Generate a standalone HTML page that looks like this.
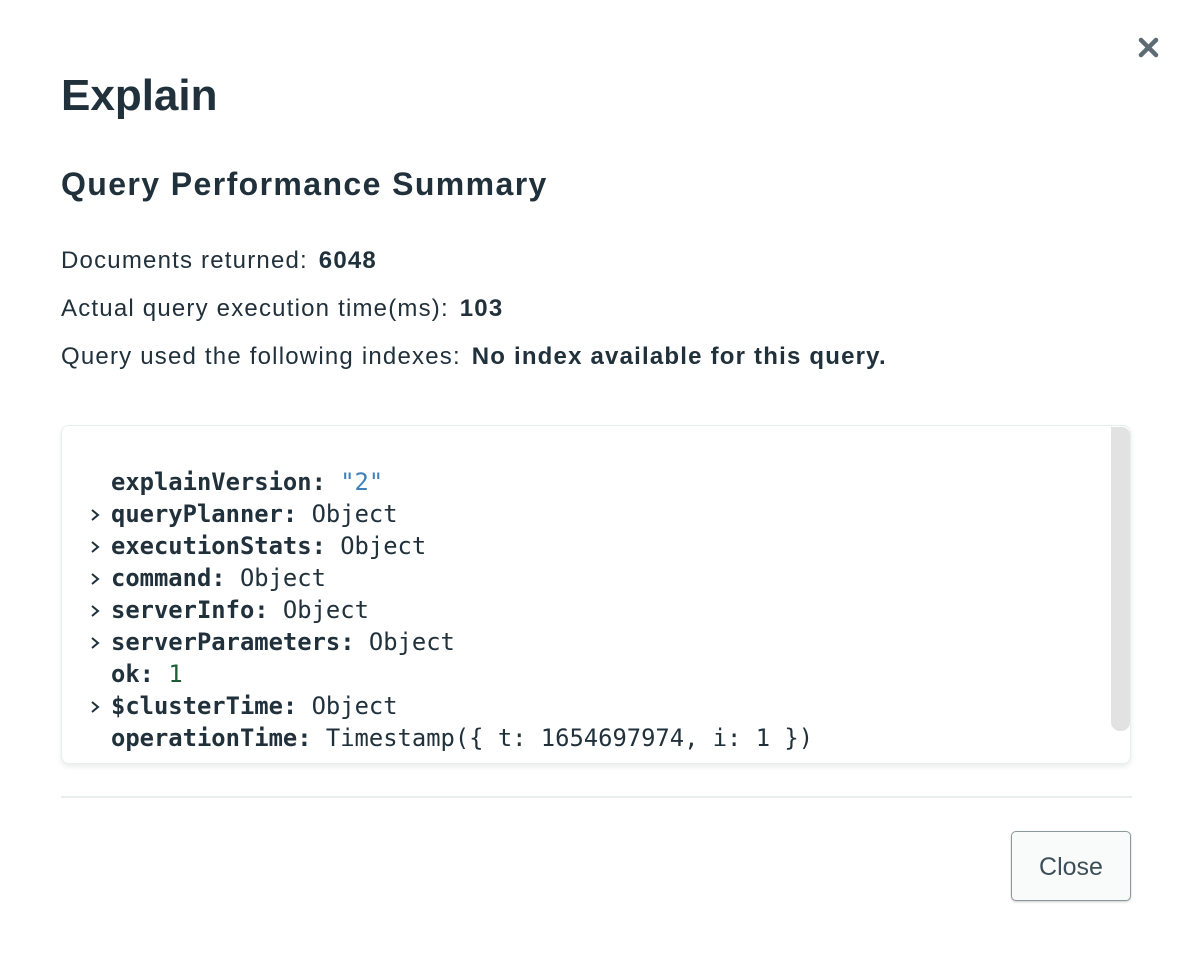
<!DOCTYPE html>
<html><head><meta charset="utf-8"><style>
body{margin:0;width:1192px;height:962px;background:#fff;font-family:"Liberation Sans",sans-serif;color:#21313c;position:relative;overflow:hidden}
.abs{position:absolute;white-space:nowrap}
h1{position:absolute;left:61px;top:68px;margin:0;font-size:44px;font-weight:bold;line-height:56px}
h2{position:absolute;left:61px;top:164px;margin:0;font-size:32px;font-weight:bold;line-height:40px;letter-spacing:1.4px}
.p{position:absolute;left:61px;font-size:24px;line-height:30px;white-space:nowrap;letter-spacing:1.2px}
.p b{font-weight:bold;margin-left:3px}
.box{position:absolute;left:61px;top:425px;width:1068px;height:337px;border:1px solid #e7eeec;border-radius:8px;box-shadow:0 3px 6px rgba(0,0,0,0.08);background:#fff}
.sb{position:absolute;left:1111px;top:427px;width:19px;height:304px;background:#e2e2e2;border-radius:0 8px 9px 9px}
.code{position:absolute;left:86px;top:466px;font-family:"DejaVu Sans Mono",monospace;font-size:23.8px;line-height:32px;white-space:pre;color:#21313c}
.code b{font-weight:bold}
.s{color:#3f80b8}.n{color:#1b5e35}
.ar{display:inline-block;width:25px;position:relative}
.ar svg{position:absolute;left:3px;top:-15px}
.hr{position:absolute;left:61px;top:796px;width:1071px;height:2px;background:#e7eeec}
.btn{position:absolute;left:1011px;top:831px;width:118px;height:68px;border:1.5px solid #89989b;border-radius:5px;background:#f9fbfa;box-shadow:0 1px 2px rgba(0,0,0,0.2);font-size:25px;color:#3d4f58;text-align:center;line-height:70px}
</style></head><body>
<svg class="abs" style="left:1138px;top:37px" width="21" height="21" viewBox="0 0 21 21"><path d="M3 3L18 18M18 3L3 18" stroke="#5d6c74" stroke-width="4.5" stroke-linecap="round"/></svg>
<h1>Explain</h1>
<h2>Query Performance Summary</h2>
<div class="p" style="top:246px">Documents returned: <b>6048</b></div>
<div class="p" style="top:294px">Actual query execution time(ms): <b>103</b></div>
<div class="p" style="top:342px">Query used the following indexes: <b>No index available for this query.</b></div>
<div class="box"></div>
<div class="sb"></div>
<div class="code"><span class="ar"></span><b>explainVersion:</b> <span class="s">"2"</span>
<span class="ar"><svg width="12" height="16" viewBox="0 0 12 16"><path d="M3 3L9 8L3 13" fill="none" stroke="#21313c" stroke-width="2"/></svg></span><b>queryPlanner:</b> Object
<span class="ar"><svg width="12" height="16" viewBox="0 0 12 16"><path d="M3 3L9 8L3 13" fill="none" stroke="#21313c" stroke-width="2"/></svg></span><b>executionStats:</b> Object
<span class="ar"><svg width="12" height="16" viewBox="0 0 12 16"><path d="M3 3L9 8L3 13" fill="none" stroke="#21313c" stroke-width="2"/></svg></span><b>command:</b> Object
<span class="ar"><svg width="12" height="16" viewBox="0 0 12 16"><path d="M3 3L9 8L3 13" fill="none" stroke="#21313c" stroke-width="2"/></svg></span><b>serverInfo:</b> Object
<span class="ar"><svg width="12" height="16" viewBox="0 0 12 16"><path d="M3 3L9 8L3 13" fill="none" stroke="#21313c" stroke-width="2"/></svg></span><b>serverParameters:</b> Object
<span class="ar"></span><b>ok:</b> <span class="n">1</span>
<span class="ar"><svg width="12" height="16" viewBox="0 0 12 16"><path d="M3 3L9 8L3 13" fill="none" stroke="#21313c" stroke-width="2"/></svg></span><b>$clusterTime:</b> Object
<span class="ar"></span><b>operationTime:</b> Timestamp({ t: 1654697974, i: 1 })</div>
<div class="hr"></div>
<div class="btn">Close</div>
</body></html>
